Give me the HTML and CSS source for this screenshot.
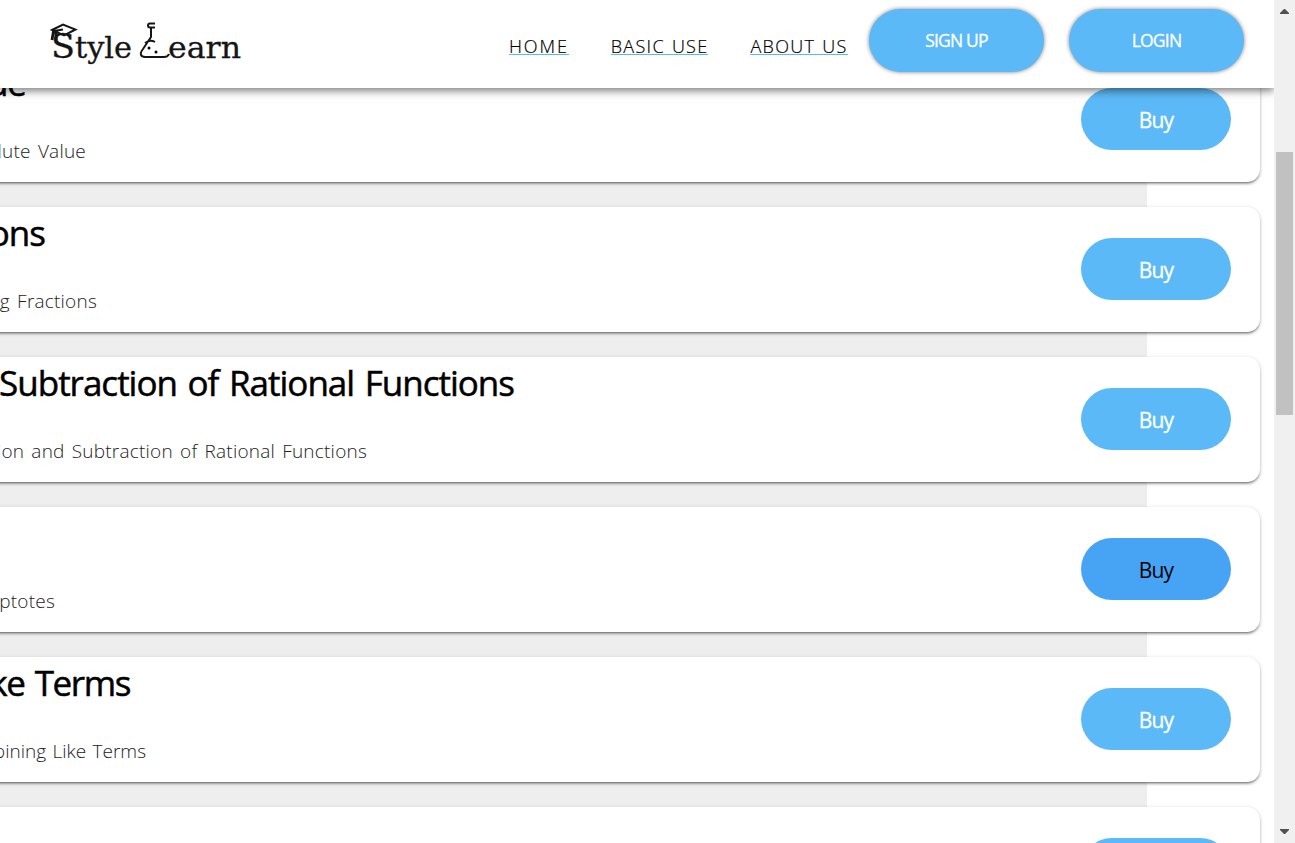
FILE: index.html
```html
<!DOCTYPE html>
<html lang="en">
<head>
<meta charset="utf-8">
<title>Style Learn</title>
<link rel="stylesheet" href="styles.css">
</head>
<body>
<div class="page">
  <header class="header">
    <svg class="logo" viewBox="0 0 200 50" role="img" aria-label="Style Learn">
      <g class="logo-text">
        <text x="2" y="38.500" font-size="34" textLength="24" lengthAdjust="spacingAndGlyphs">S</text>
        <text x="26" y="38.500" font-size="30" textLength="57" lengthAdjust="spacingAndGlyphs">tyle</text>
        <text x="119" y="38.500" font-size="30" textLength="73" lengthAdjust="spacingAndGlyphs">earn</text>
      </g>
      <path class="cap" d="M3 11 14 5.500 26.500 10.500 15 16.500Z M14 10.500 5 12"/>
      <path class="tassel" d="M4.500 12 3 21M7 13v8"/>
      <path class="flask" d="M106 4.500h-5q-2 0-2 2t2 2h5M102 9v9l-8 12c-4 5-2 8 2 8h19q4 0 5-3M96 24q5-4 10-1"/>
      <circle cx="100" cy="29" r="1.500"/><circle cx="107" cy="33" r="1.500"/>
    </svg>
    <nav class="nav">
      <a>HOME</a><a>BASIC USE</a><a>ABOUT US</a>
    </nav>
    <div class="actions"><button>SIGN UP</button><button>LOGIN</button></div>
  </header>
  <main class="list">
    <article class="card"><div class="copy"><h2 class="w1">ue</h2><p class="d1">lute Value</p></div><button class="buy">Buy</button></article>
    <article class="card"><div class="copy"><h2 class="w2">ons</h2><p class="d2">ng Fractions</p></div><button class="buy">Buy</button></article>
    <article class="card"><div class="copy"><h2 class="w3">Subtraction of Rational Functions</h2><p class="d3">ion and Subtraction of Rational Functions</p></div><button class="buy">Buy</button></article>
    <article class="card"><div class="copy"><h2></h2><p class="d4">ptotes</p></div><button class="buy active">Buy</button></article>
    <article class="card"><div class="copy"><h2 class="w5">ke Terms</h2><p class="d5">bining Like Terms</p></div><button class="buy">Buy</button></article>
    <article class="card"><div class="copy"></div><button class="buy">Buy</button></article>
  </main>
</div>
<div class="scrollbar">
  <svg viewBox="0 0 9 5"><path d="M4 0h1L9 4v1H0V4Z"/></svg>
  <div class="thumb"></div>
  <svg viewBox="0 0 9 5"><path d="M0 0h9v1L5 5H4L0 1Z"/></svg>
</div>
</body>
</html>
```
FILE: styles.css
```css
* { box-sizing: border-box; }
body { margin: 0; height: 843px; overflow: hidden; display: flex; background: #fff; font-family: "Open Sans", "Noto Sans", sans-serif; color: #000; }
button { border: 0; padding: 0; font-family: inherit; color: #fff; background: #5bb9f7; -webkit-text-stroke: .3px currentColor; }
.page { width: 1274px; height: 843px; overflow: hidden; }
.header { position: relative; z-index: 1; height: 88px; display: flex; background: #fff; box-shadow: 0 3px 8px rgba(0,0,0,.5); }
.logo { width: 200px; height: 50px; margin: 19px 0 0 49px; flex: none; }
.logo-text { font-family: "DejaVu Serif", serif; fill: #151515; stroke: #151515; stroke-width: .3px; }
.logo path { fill: none; stroke: #151515; stroke-width: 2; }
.logo .tassel { stroke-width: 2.800; }
.nav { display: flex; gap: 42px; margin: 36px 0 0 260px; width: 360px; flex: none; }
.nav a { height: 19px; line-height: 21px; font-size: 18px; font-weight: 300; letter-spacing: 1.300px; word-spacing: 1px; white-space: nowrap; border-bottom: 1px solid #5bb8f7; -webkit-text-stroke: .2px #000; }
.nav a:first-child { letter-spacing: 1.900px; }
.actions { display: flex; gap: 25px; margin-top: 9px; }
.actions button { width: 175px; height: 63px; border-radius: 32px; padding-bottom: 1px; font-size: 17.500px; letter-spacing: -.8px; box-shadow: 0 0 4px rgba(0,0,0,.5); }
.list { height: 755px; display: flex; flex-direction: column; gap: 25px; background: linear-gradient(90deg, #eee 1147px, #fff 1147px); }
.card { flex: none; height: 125px; width: 1280px; margin-left: -20px; padding-left: 20px; display: flex; justify-content: space-between; background: #fff; border-radius: 13px; box-shadow: 0 2px 3px -1px rgba(0,0,0,.6), 0 1px 5px rgba(0,0,0,.14); }
.card:first-child { margin-top: -31px; }
.copy { width: 800px; }
h2, p { margin: 0; display: flex; justify-content: flex-end; white-space: nowrap; }
h2 { height: 74px; font-size: 35px; line-height: 51px; font-weight: 400; letter-spacing: -1px; word-spacing: 2.500px; -webkit-text-stroke: .5px #000; }
p { font-size: 19px; line-height: 40px; font-weight: 300; letter-spacing: .22px; word-spacing: 2px; color: #222; }
.w1 { width: 26px; } .d1 { width: 86px; }
.w2 { width: 45px; } .d2 { width: 97px; }
.w3 { width: 514px; } .d3 { width: 367px; }
.d4 { width: 55px; }
.w5 { width: 130px; letter-spacing: -1.400px; } .d5 { width: 146px; letter-spacing: 0; word-spacing: 1.500px; }
.buy { width: 150px; height: 62px; margin: 31px 29px 0 0; padding-top: 2px; border-radius: 31px; font-size: 21px; letter-spacing: -.8px; }
.buy.active { background: #47a4f5; color: #000; -webkit-text-stroke: 0; }
.scrollbar { width: 21px; height: 843px; background: #f0f0f0; display: flex; flex-direction: column; padding: 9px 2px; }
.scrollbar svg { width: 9px; height: 5px; margin-left: 4px; fill: #505050; }
.thumb { width: 17px; height: 263px; margin: 138px 0 414px; background: #c1c1c1; }
```
